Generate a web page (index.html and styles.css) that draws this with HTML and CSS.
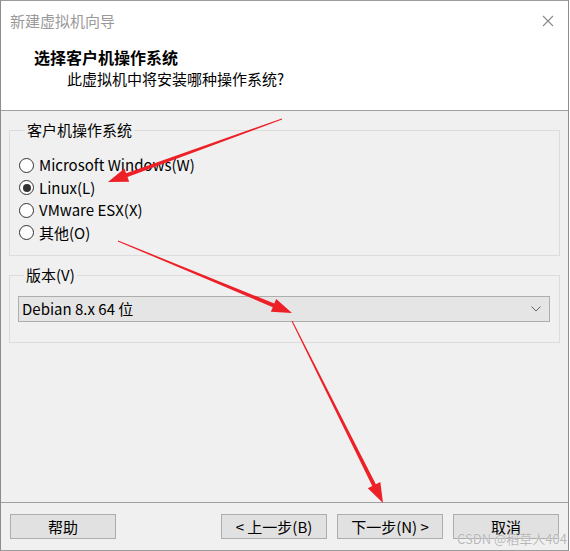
FILE: index.html
```html
<!DOCTYPE html>
<html lang="zh-CN">
<head>
<meta charset="utf-8">
<title>新建虚拟机向导</title>
<link rel="stylesheet" href="styles.css">
</head>
<body>
<div class="window">
  <div class="header">
    <div class="titlebar">
      <span class="title">新建虚拟机向导</span>
      <svg class="close" width="12" height="12" viewBox="0 0 12 12"><path d="M1 1L11 11M11 1L1 11" stroke="#8a8a8a" stroke-width="1.1" fill="none"/></svg>
    </div>
    <div class="heading">选择客户机操作系统</div>
    <div class="subheading">此虚拟机中将安装哪种操作系统?</div>
  </div>
  <div class="body">
    <fieldset class="group group-os">
      <legend>客户机操作系统</legend>
      <div class="radio"><span class="dot"></span><span>Microsoft Windows(W)</span></div>
      <div class="radio"><span class="dot checked"></span><span>Linux(L)</span></div>
      <div class="radio"><span class="dot"></span><span>VMware ESX(X)</span></div>
      <div class="radio"><span class="dot"></span><span>其他(O)</span></div>
    </fieldset>
    <fieldset class="group group-ver">
      <legend>版本(V)</legend>
      <div class="combo">
        <span>Debian 8.x 64 位</span>
        <svg class="chev" width="10" height="6" viewBox="0 0 10 6"><path d="M0.5 0.5L5 5L9.5 0.5" stroke="#606060" stroke-width="1" fill="none"/></svg>
      </div>
    </fieldset>
  </div>
  <div class="footer">
    <div class="btn">帮助</div>
    <div class="nav">
      <div class="btn">&lt; 上一步(B)</div>
      <div class="btn">下一步(N) &gt;</div>
      <div class="btn">取消</div>
    </div>
  </div>
  <div class="watermark">CSDN @稻草人404</div>
  <svg class="arrows" width="570" height="551" viewBox="0 0 570 551">
    <polygon fill="#ee2027" points="281.83,118.53 126.13,173.31 124.43,168.61 108,182 129.19,181.77 127.49,177.07 282.17,119.47"/>
    <polygon fill="#ee2027" points="117.81,241.46 272.76,307.20 270.84,311.82 292,313 276.20,298.88 274.28,303.50 118.19,240.54"/>
    <polygon fill="#ee2027" points="291.55,321.22 372.27,486.00 367.80,488.24 383,503 380.32,481.98 375.85,484.22 292.45,320.78"/>
  </svg>
</div>
</body>
</html>
```

FILE: styles.css
```css
* { box-sizing: border-box; }
html, body { margin: 0; padding: 0; }
body {
  width: 570px;
  height: 551px;
  font-family: "Noto Sans CJK SC", "Noto Sans", sans-serif;
  font-size: 15px;
  color: #000;
  background: #fff;
}
.window {
  position: relative;
  width: 569px;
  height: 551px;
  border-top: 1px solid #9c9c9c;
  border-left: 1px solid #8c8c8c;
  border-right: 1px solid #8c8c8c;
  border-bottom: 1px solid #9c9c9c;
  background: #f0f0f0;
  display: flex;
  flex-direction: column;
}
.header {
  background: #fff;
  border-bottom: 1px solid #a0a0a0;
  padding-bottom: 20px;
}
.titlebar {
  height: 40px;
  display: flex;
  align-items: center;
  justify-content: space-between;
  padding: 0 14px 0 9px;
}
.title {
  color: #999;
  font-size: 15px;
  line-height: 20px;
}
.close { display: block; }
.heading {
  margin-top: 5px;
  padding-left: 33px;
  font-size: 16px;
  font-weight: bold;
  line-height: 22px;
}
.subheading {
  padding-left: 66px;
  line-height: 22px;
}
.body {
  flex: 1;
  padding: 0 8px;
}
.group {
  margin: 0;
  padding: 0;
  border: 1px solid #dcdcdc;
  min-width: 0;
}
.group legend {
  margin-left: 6px;
  padding: 0 2px;
  line-height: 20px;
}
.group-os {
  margin-top: 9px;
  padding: 14px 0 11px 9px;
}
.radio {
  display: flex;
  align-items: center;
  gap: 5px;
  height: 22.5px;
  line-height: 22px;
}
.dot {
  width: 15px;
  height: 15px;
  border: 1px solid #333;
  border-radius: 50%;
  background: #fff;
  display: flex;
  align-items: center;
  justify-content: center;
}
.dot.checked::after {
  content: "";
  width: 8px;
  height: 8px;
  border-radius: 50%;
  background: #333;
}
.group-ver {
  margin-top: 9px;
  padding: 11px 9px 20px 8px;
}
.combo {
  height: 26px;
  border: 1px solid #adadad;
  background: #e5e5e5;
  display: flex;
  align-items: center;
  justify-content: space-between;
  padding: 0 8px 0 3px;
  line-height: 24px;
}
.chev { display: block; }
.footer {
  border-top: 1px solid #a0a0a0;
  height: 48px;
  padding: 11px 9px 0 9px;
  display: flex;
  justify-content: space-between;
  align-items: flex-start;
}
.nav {
  display: flex;
  gap: 10px;
}
.btn {
  width: 106px;
  height: 25px;
  border: 1px solid #adadad;
  background: #e1e1e1;
  text-align: center;
  line-height: 23px;
}
.watermark {
  position: absolute;
  right: 1px;
  bottom: 4px;
  font-size: 13px;
  line-height: 14px;
  color: rgba(160,160,160,0.75);
  text-shadow: 0 0 1px #fff;
}
.arrows {
  position: absolute;
  left: -1px;
  top: -1px;
  pointer-events: none;
}
```
